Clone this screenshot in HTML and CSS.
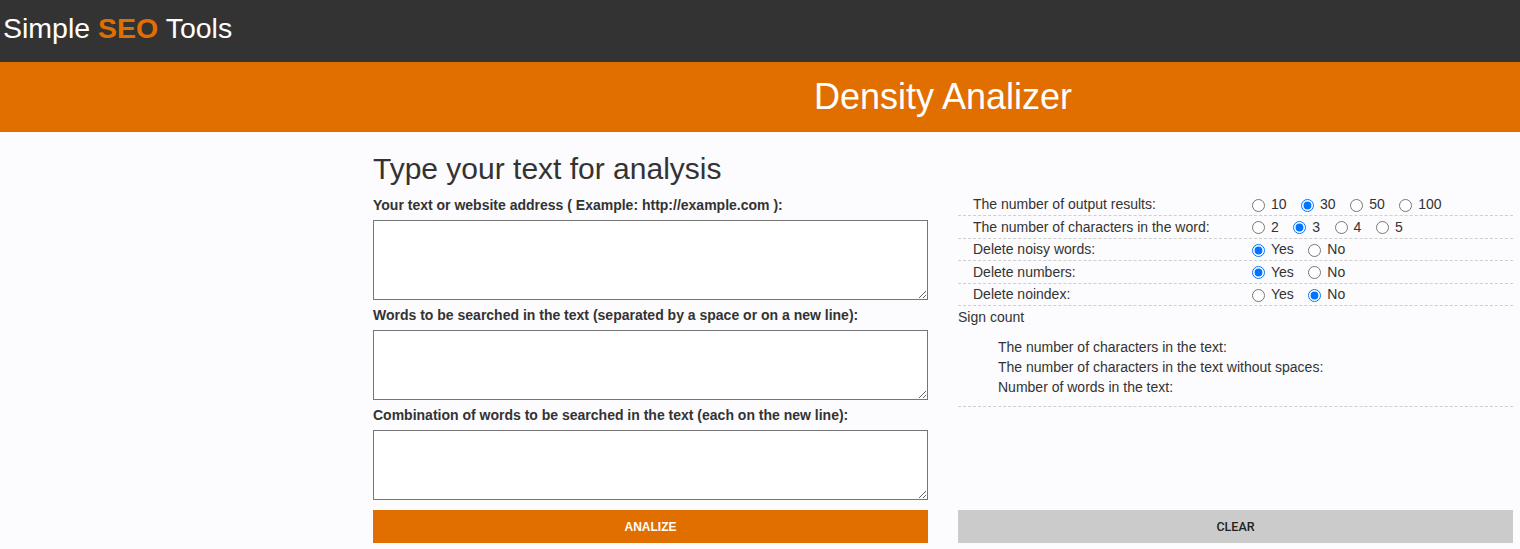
FILE: index.html
```html
<!DOCTYPE html>
<html lang="en">
<head>
<meta charset="utf-8">
<title>Density Analizer - Simple SEO Tools</title>
<link rel="stylesheet" href="styles.css">
</head>
<body>
<header class="topbar">
  <div class="brand">Simple <b class="brand-accent">SEO</b> Tools</div>
</header>
<div class="band">
  <div class="band-side"></div>
  <h1 class="band-title">Density Analizer</h1>
</div>
<div class="page">
  <aside class="sidebar"></aside>
  <main class="main">
    <section class="col col-left">
      <h2 class="heading">Type your text for analysis</h2>
      <label class="field-label">Your text or website address ( Example: http://example.com ):</label>
      <textarea class="area area-lg"></textarea>
      <label class="field-label">Words to be searched in the text (separated by a space or on a new line):</label>
      <textarea class="area"></textarea>
      <label class="field-label">Combination of words to be searched in the text (each on the new line):</label>
      <textarea class="area"></textarea>
      <button class="btn btn-primary">ANALIZE</button>
    </section>
    <section class="col col-right">
      <div class="opt-row">
        <div class="opt-label">The number of output results:</div>
        <div class="opt-values">
          <label class="opt"><input type="radio" name="res">10</label>
          <label class="opt"><input type="radio" name="res" checked>30</label>
          <label class="opt"><input type="radio" name="res">50</label>
          <label class="opt"><input type="radio" name="res">100</label>
        </div>
      </div>
      <div class="opt-row">
        <div class="opt-label">The number of characters in the word:</div>
        <div class="opt-values">
          <label class="opt"><input type="radio" name="chars">2</label>
          <label class="opt"><input type="radio" name="chars" checked>3</label>
          <label class="opt"><input type="radio" name="chars">4</label>
          <label class="opt"><input type="radio" name="chars">5</label>
        </div>
      </div>
      <div class="opt-row">
        <div class="opt-label">Delete noisy words:</div>
        <div class="opt-values">
          <label class="opt"><input type="radio" name="noisy" checked>Yes</label>
          <label class="opt"><input type="radio" name="noisy">No</label>
        </div>
      </div>
      <div class="opt-row">
        <div class="opt-label">Delete numbers:</div>
        <div class="opt-values">
          <label class="opt"><input type="radio" name="nums" checked>Yes</label>
          <label class="opt"><input type="radio" name="nums">No</label>
        </div>
      </div>
      <div class="opt-row">
        <div class="opt-label">Delete noindex:</div>
        <div class="opt-values">
          <label class="opt"><input type="radio" name="noindex">Yes</label>
          <label class="opt"><input type="radio" name="noindex" checked>No</label>
        </div>
      </div>
      <div class="count">
        <div class="count-title">Sign count</div>
        <ul class="count-list">
          <li>The number of characters in the text:</li>
          <li>The number of characters in the text without spaces:</li>
          <li>Number of words in the text:</li>
        </ul>
      </div>
      <button class="btn btn-secondary">CLEAR</button>
    </section>
  </main>
</div>
</body>
</html>
```
FILE: styles.css
```css
* { box-sizing: border-box; }
html, body {
  margin: 0;
  padding: 0;
  background: #fcfbfd;
  font-family: "Liberation Sans", Arial, sans-serif;
  color: #333;
}
.topbar {
  height: 62px;
  background: #333333;
  padding: 12px 0 0 3px;
}
.brand {
  color: #fff;
  font-size: 28.5px;
  line-height: 32px;
}
.brand-accent {
  color: #e16f00;
  font-weight: bold;
}
.band {
  height: 70px;
  background: #e16f00;
  display: grid;
  grid-template-columns: 373px 1fr;
  padding-right: 7px;
  align-items: center;
}
.band-title {
  margin: 0;
  color: #fff;
  font-weight: normal;
  font-size: 36px;
  line-height: 42px;
  text-align: center;
}
.page {
  display: grid;
  grid-template-columns: 373px 1fr;
  padding-right: 7px;
}
.main {
  display: grid;
  grid-template-columns: 555px 555px;
  column-gap: 30px;
  padding-top: 20px;
  padding-bottom: 6px;
}
.col {
  display: flex;
  flex-direction: column;
}
.heading {
  margin: 0 0 10px;
  font-size: 30px;
  line-height: 34px;
  font-weight: normal;
  color: #333;
}
.field-label {
  display: block;
  font-size: 14px;
  line-height: 18px;
  font-weight: bold;
  color: #333;
  margin: 0 0 6px;
}
.area {
  display: block;
  width: 555px;
  height: 70px;
  margin: 0 0 6px;
  border: 1px solid #767676;
  background: #fff;
  font-family: "Liberation Sans", Arial, sans-serif;
  font-size: 14px;
}
.area-lg { height: 80px; }
.btn {
  display: block;
  width: 555px;
  height: 33px;
  border: none;
  font-size: 12px;
  cursor: pointer;
}
.btn-primary {
  margin-top: 4px;
  background: #e16f00;
  color: #fff;
  font-family: "Liberation Sans", Arial, sans-serif;
  font-weight: bold;
}
.col-right { padding-top: 41.5px; }
.btn-secondary {
  margin-top: auto;
  background: #cbcbcb;
  color: #222;
  font-family: Roboto, "Liberation Sans", sans-serif;
  font-weight: 500;
  font-size: 12.5px;
}
.opt-row {
  display: grid;
  grid-template-columns: 294px 1fr;
  align-items: center;
  height: 22.5px;
  border-bottom: 1px dashed #cfcfcf;
  font-size: 14px;
}
.opt-label {
  padding-left: 15px;
  color: #333;
  line-height: 16px;
}
.opt-values {
  display: flex;
  align-items: center;
}
.opt {
  display: inline-flex;
  align-items: center;
  gap: 6px;
  margin-right: 14.5px;
  line-height: 16px;
  color: #333;
}
.opt input {
  margin: 2px 0 0 0;
  width: 13px;
  height: 13px;
}
.count {
  border-bottom: 1px dashed #cfcfcf;
  padding-bottom: 9px;
  font-size: 14px;
}
.count-title {
  line-height: 20px;
  padding-top: 1px;
}
.count-list {
  list-style: none;
  margin: 10px 0 0;
  padding-left: 40px;
}
.count-list li {
  line-height: 20px;
}
```
